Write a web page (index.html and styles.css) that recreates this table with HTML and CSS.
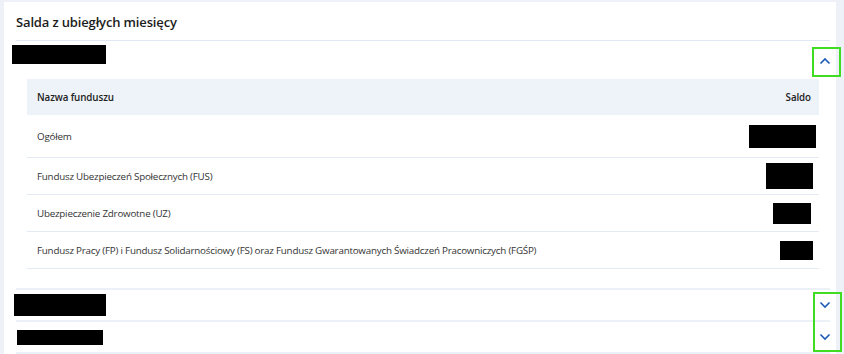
FILE: index.html
```html
<!DOCTYPE html>
<html lang="pl">
<head>
<meta charset="utf-8">
<link rel="stylesheet" href="styles.css">
</head>
<body>
<div class="card">
  <h2 class="title">Salda z ubiegłych miesięcy</h2>

  <section class="acc acc-open">
    <div class="acc-head acc-head-open">
      <span class="redact r-head1"></span>
      <button class="chev" aria-label="Zwiń">
        <svg width="12" height="8" viewBox="0 0 12 8"><path d="M1.5 6.5 L6 2 L10.5 6.5" fill="none" stroke="#1d5bb8" stroke-width="1.6"/></svg>
      </button>
    </div>
    <div class="acc-body">
      <table class="tbl">
        <thead>
          <tr><th class="c-name">Nazwa funduszu</th><th class="c-val">Saldo</th></tr>
        </thead>
        <tbody>
          <tr class="row-first"><td>Ogółem</td><td class="c-val"><span class="redact r1"></span></td></tr>
          <tr><td>Fundusz Ubezpieczeń Społecznych (FUS)</td><td class="c-val"><span class="redact r2"></span></td></tr>
          <tr><td>Ubezpieczenie Zdrowotne (UZ)</td><td class="c-val"><span class="redact r3"></span></td></tr>
          <tr><td>Fundusz Pracy (FP) i Fundusz Solidarnościowy (FS) oraz Fundusz Gwarantowanych Świadczeń Pracowniczych (FGŚP)</td><td class="c-val"><span class="redact r4"></span></td></tr>
        </tbody>
      </table>
    </div>
  </section>

  <section class="acc">
    <div class="acc-head">
      <span class="redact r-head2"></span>
      <button class="chev" aria-label="Rozwiń">
        <svg width="12" height="8" viewBox="0 0 12 8"><path d="M1.5 1.5 L6 6 L10.5 1.5" fill="none" stroke="#1d5bb8" stroke-width="1.6"/></svg>
      </button>
    </div>
  </section>

  <section class="acc">
    <div class="acc-head">
      <span class="redact r-head3"></span>
      <button class="chev" aria-label="Rozwiń">
        <svg width="12" height="8" viewBox="0 0 12 8"><path d="M1.5 1.5 L6 6 L10.5 1.5" fill="none" stroke="#1d5bb8" stroke-width="1.6"/></svg>
      </button>
    </div>
  </section>

  <div class="mark mark-1"></div>
  <div class="mark mark-2"></div>
</div>
</body>
</html>
```

FILE: styles.css
```css
html, body {
  margin: 0;
  padding: 0;
  height: 100%;
  overflow: hidden;
  background: #eef2f8;
  font-family: "Open Sans", "Noto Sans", sans-serif;
  color: #222;
}

.card {
  position: relative;
  margin: 2px 8px 0 4px;
  background: #fff;
  padding: 0 6px 0 12px;
  height: 400px;
}

.title {
  margin: 0;
  height: 38px;
  line-height: 40px;
  font-size: 13px;
  font-weight: 600;
  letter-spacing: -0.15px;
  color: #1c1c1c;
  border-bottom: 1px solid #dfe8f3;
}

.acc {
  border-bottom: 2px solid #ecf1f7;
}

.acc-head {
  display: flex;
  justify-content: space-between;
  align-items: center;
  height: 30px;
}

.acc-head-open {
  align-items: flex-start;
  height: 38px;
}

.acc-head-open .redact {
  margin-top: 4px;
}

.acc-head-open .chev {
  margin-top: 5px;
}

.chev {
  width: 28px;
  height: 29px;
  border: 0;
  background: transparent;
  padding: 0;
  display: flex;
  align-items: center;
  justify-content: center;
  margin-right: -9px;
}

.redact {
  display: inline-block;
  background: #000;
}

.r-head1 { width: 94px; height: 19px; margin-left: -4px; }
.r-head2 { width: 92px; height: 22px; margin-left: -2px; }
.r-head3 { width: 86px; height: 15px; margin-left: 1px; }

.acc-body {
  padding: 0 11px 19px 11px;
}

.tbl {
  width: 100%;
  border-collapse: collapse;
  font-size: 9.8px;
  letter-spacing: -0.22px;
}

.tbl th {
  background: #eef3f9;
  height: 36px;
  padding: 0 10px;
  font-weight: 600;
  letter-spacing: -0.1px;
  text-align: left;
  color: #222;
}

.tbl th.c-val {
  text-align: right;
  padding-right: 8px;
}

.tbl td {
  height: 36px;
  padding: 0 10px;
  border-bottom: 1px solid #e3eaf4;
  color: #333;
}

.tbl .row-first td {
  height: 42px;
}

.tbl td.c-val {
  text-align: right;
  padding-right: 3px;
  width: 120px;
}

.tbl td .redact { vertical-align: middle; }
.r1 { width: 67px; height: 23px; }
.r2 { width: 47px; height: 26px; margin-right: 3px; }
.r3 { width: 38px; height: 21px; margin-right: 5px; }
.r4 { width: 33px; height: 19px; margin-right: 3px; }

.mark {
  position: absolute;
  border: 2px solid #3fdc22;
  box-sizing: border-box;
}

.mark-1 { left: 808px; top: 45px; width: 29px; height: 30px; }
.mark-2 { left: 809px; top: 290px; width: 29px; height: 60px; }
```
